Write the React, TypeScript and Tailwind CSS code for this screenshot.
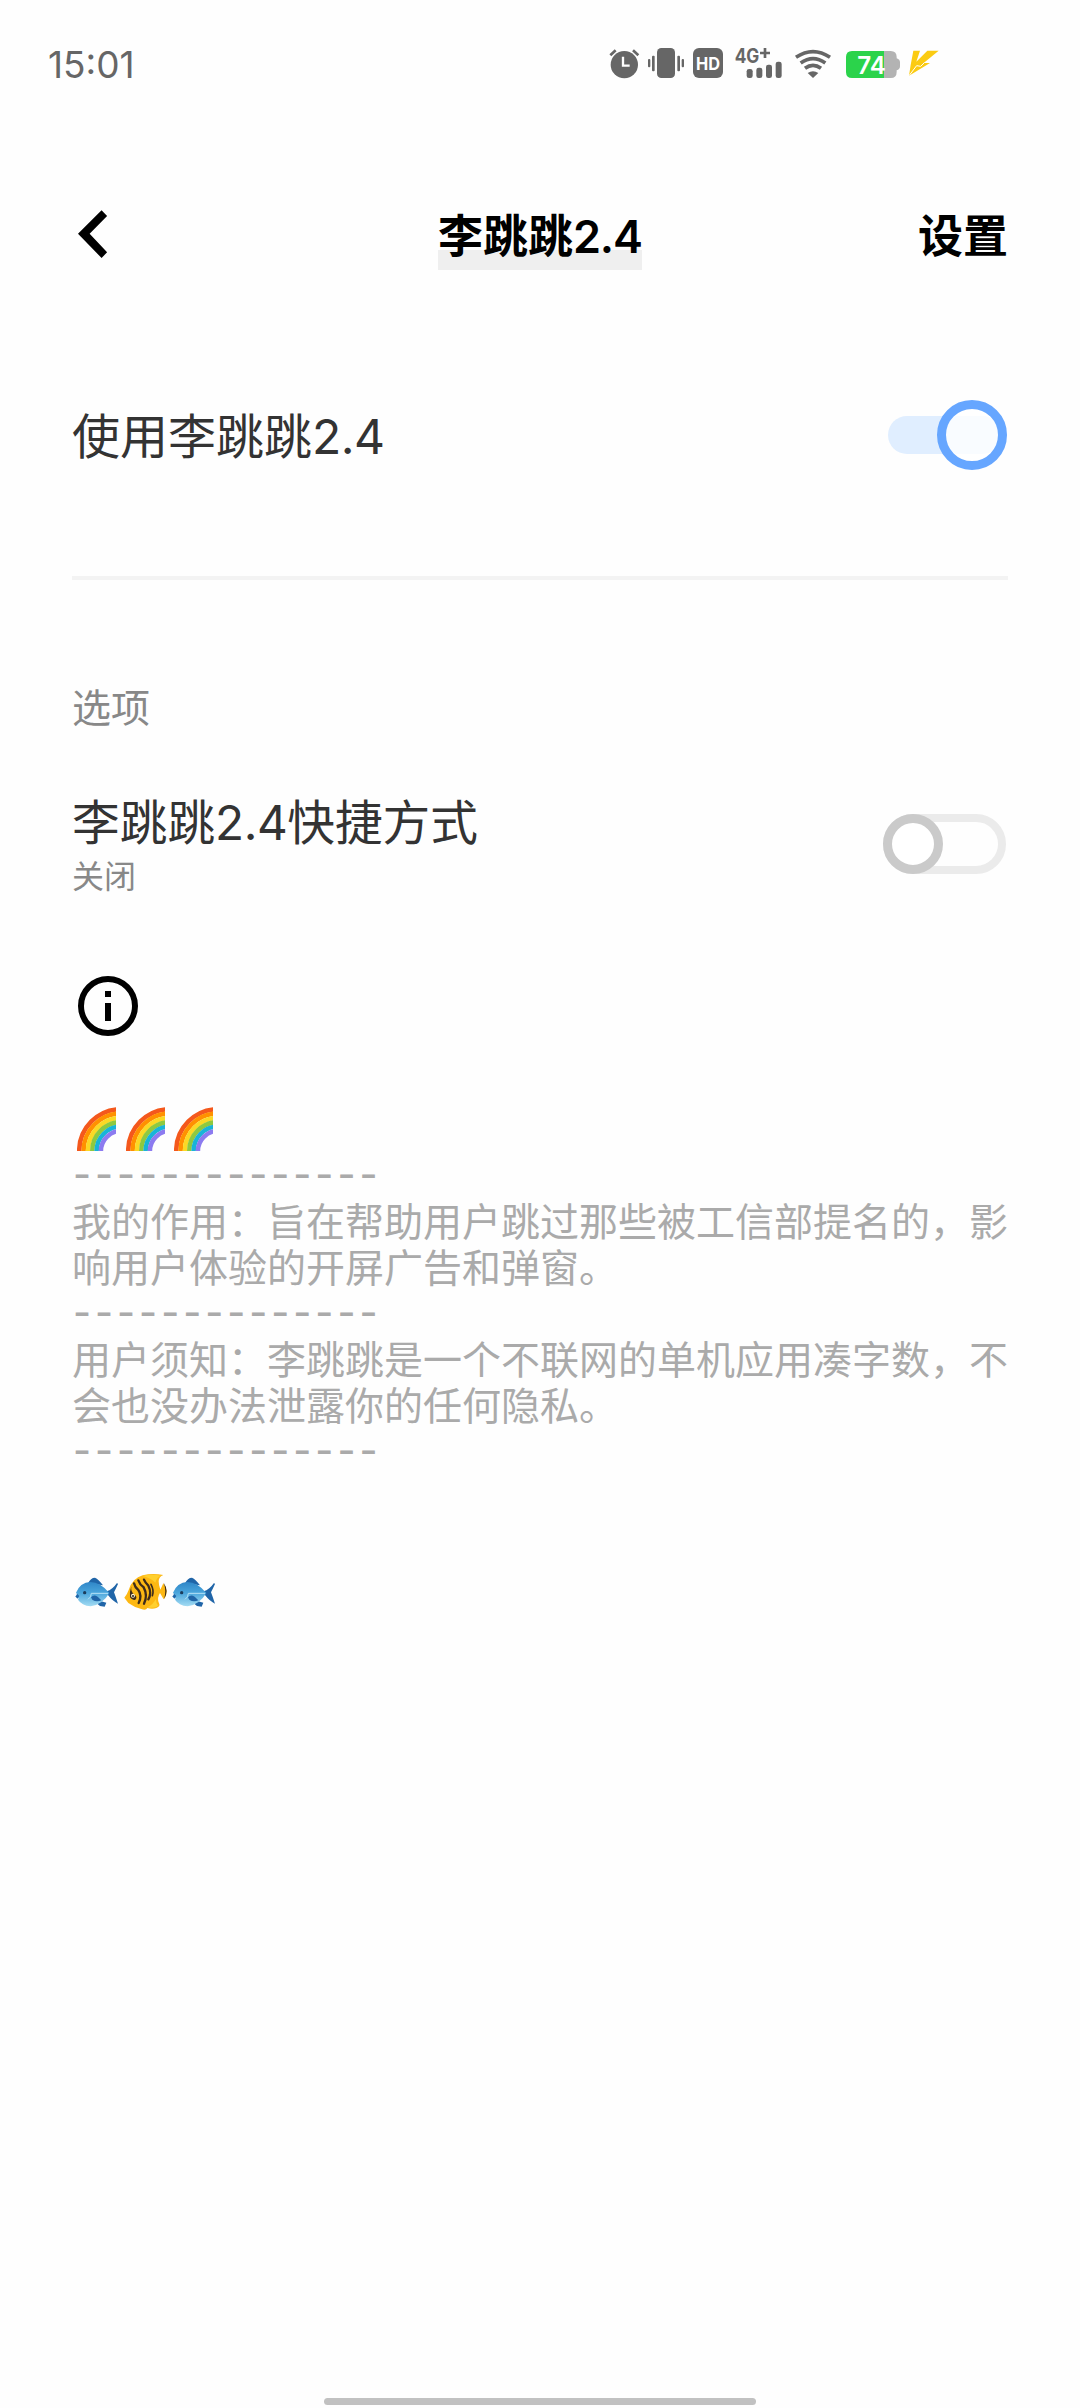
import { useState } from 'react'

function StatusBar() {
  return (
    <div className="flex h-[132px] items-start pl-[48px] text-[#666666]">
      <div className="mt-[41px] w-[561px] font-['Inter'] text-[37px] leading-[48px]">15:01</div>
      <div className="mt-[47px] flex">
        <svg className="h-[33px] w-[31px]" viewBox="57 51 93 99" fill="currentColor">
          <circle cx="103" cy="104" r="41" />
          <path d="M61 76 77 61M145 76 129 61" stroke="currentColor" strokeWidth="8" />
          <path d="M99 80V107H119" fill="none" stroke="#fff" strokeWidth="7" />
        </svg>
        <svg className="ml-[7px] h-[33px] w-[38px]" viewBox="171 51 114 99" fill="currentColor">
          <rect x="201" y="54" width="54" height="90" rx="13" />
          <rect x="186" y="77" width="8" height="47" rx="3" />
          <rect x="174" y="87" width="7" height="25" rx="3" />
          <rect x="262" y="77" width="8" height="47" rx="3" />
          <rect x="275" y="87" width="7" height="25" rx="3" />
        </svg>
        <svg className="ml-[8px] h-[33px] w-[30px]" viewBox="309 51 90 99" fill="currentColor">
          <rect x="309" y="54" width="90" height="90" rx="18" />
          <text x="354" y="119" textAnchor="middle" textLength="72" lengthAdjust="spacingAndGlyphs" fill="#fff" className="font-['Inter'] text-[54px] font-bold">HD</text>
        </svg>
        <svg className="ml-[11px] h-[33px] w-[49px] overflow-visible" viewBox="432 51 147 99" fill="currentColor">
          <text x="434" y="98" textLength="74" lengthAdjust="spacingAndGlyphs" className="font-['Inter'] text-[59px] font-bold">4G</text>
          <path d="M510 69H540M525 54V84" stroke="currentColor" strokeWidth="8" />
          <rect x="470" y="117" width="18" height="27" rx="7" />
          <rect x="499" y="113" width="18" height="31" rx="7" />
          <rect x="528" y="104" width="18" height="40" rx="7" />
          <rect x="557" y="95" width="18" height="49" rx="7" />
        </svg>
        <svg className="ml-[11px] h-[33px] w-[38px]" viewBox="612 51 114 99" fill="none" stroke="currentColor" strokeWidth="11">
          <path d="M618 82Q669 48 720 82" />
          <path d="M632 99Q669 73 706 99" />
          <path d="M645 115Q669 97 693 115" />
          <path d="M653 129Q669 118 685 129L669 144Z" fill="currentColor" stroke="none" />
        </svg>
        <svg className="ml-[14px] h-[33px] w-[55px]" viewBox="768 51 165 99">
          <path d="M882 63H902Q920 63 920 81V85Q930 88 930 97V109Q930 118 920 121V126Q920 144 902 144H882Z" fill="#b3b3b3" />
          <path d="M882 63H786Q768 63 768 81V126Q768 144 786 144H882Z" fill="#2bd34b" />
          <text x="802" y="131" textLength="86" lengthAdjust="spacingAndGlyphs" fill="#fff" className="font-['Inter'] text-[72px] font-semibold">74</text>
        </svg>
        <svg className="ml-[7px] h-[33px] w-[31px]" viewBox="954 51 93 99" fill="#fbcb12">
          <path d="M970 62H990L979 95 1012 62H1046L1001 99H1020L957 137 962 105Z" />
          <path d="M957 137 980 107 992 109 1003 98" fill="none" stroke="#fff" strokeWidth="3" />
        </svg>
      </div>
    </div>
  )
}

function Header() {
  return (
    <header className="grid h-[212px] grid-cols-3 items-start px-[72px] text-[45px] font-bold leading-[66px] text-black">
      <svg className="mt-[76px] ml-[6px] h-[52px] w-[30px]" viewBox="0 0 30 52">
        <path d="M24.3 2.3 30 8 12 25.7 30 44.3 24.3 50 0 25.7Z" transform="scale(.97 1)" />
      </svg>
      <div className="mt-[69px] flex justify-center">
        <h1 className="h-[69px] w-[204px] bg-[linear-gradient(transparent_49px,#efefef_49px)] whitespace-nowrap">
          李跳跳<span className="font-['Inter'] font-semibold tracking-[-1.2px]">2.4</span>
        </h1>
      </div>
      <button className="mt-[69px] text-right">设置</button>
    </header>
  )
}

function Digits() {
  return <span className="font-['Inter'] tracking-[-0.5px]">2.4</span>
}

function SwitchOn({ onClick }: { onClick: () => void }) {
  return (
    <button className="relative h-[70px] w-[120px]" onClick={onClick}>
      <span className="absolute top-[16px] left-0 h-[38px] w-[113px] rounded-full bg-[#e0eeff]" />
      <span className="absolute top-0 right-[1px] size-[70px] rounded-full border-[9px] border-[#66a6ff] bg-white/80 bg-clip-padding" />
    </button>
  )
}

function SwitchOff({ onClick }: { onClick: () => void }) {
  return (
    <button className="relative h-[60px] w-[123px] rounded-full border-[8px] border-[#ebebeb]" onClick={onClick}>
      <span className="absolute -top-[8px] -left-[8px] size-[60px] rounded-full border-[9px] border-[#cacaca] bg-white" />
    </button>
  )
}

const bands = ['#f4581c', '#ff9100', '#fbd925', '#8fc93f', '#18b4d8', '#8c7bf0']

function Rainbow() {
  return (
    <svg className="h-[44px] w-[39px]" viewBox="0 0 39 44" fill="none">
      {bands.map((color, i) => (
        <circle key={color} cx="44" cy="44" r={41.8 - i * 4.35} stroke={color} strokeWidth="4.5" />
      ))}
    </svg>
  )
}

function BlueFish() {
  return (
    <svg className="h-[33px] w-[43px]" viewBox="45 75 129 99">
      <defs>
        <linearGradient id="blue-fish" x1="0" y1="0" x2="0" y2="1">
          <stop offset="0" stopColor="#2f86c8" />
          <stop offset=".45" stopColor="#4ba6dc" />
          <stop offset="1" stopColor="#a4dcf3" />
        </linearGradient>
      </defs>
      <path d="M84 97Q92 80 105 80Q116 85 129 103ZM121 150 139 155 134 167 120 165Q112 160 110 154Z" fill="#2065a8" />
      <path d="M140 121Q157 116 171 96L174 99Q167 114 162 124Q167 137 174 158Q160 153 142 130Z" fill="#2065a8" />
      <path d="M48 125Q61 94 91 93Q122 94 148 126Q128 161 92 166Q65 163 54 146Q60 141 46 136Q55 130 48 125Z" fill="url(#blue-fish)" />
      <path d="M46 136Q54 130 48 125L58 135 52 143Z" fill="#2065a8" />
      <path d="M144 127H94Q94 139 84 145" fill="none" stroke="#b7e3f7" strokeWidth="3" />
      <path d="M93 139Q101 129 113 137L124 148Q109 154 97 146Z" fill="#2065a8" />
      <circle cx="74" cy="125" r="5" fill="#1c3d5c" />
    </svg>
  )
}

function YellowFish() {
  return (
    <svg className="h-[38px] w-[43px]" viewBox="192 63 129 114">
      <path d="M193 137Q202 126 206 114Q218 78 248 70Q277 63 310 69Q296 74 296 88Q296 99 301 113L310 94Q319 106 320 117Q320 132 311 142L300 123Q290 137 297 154Q302 163 289 168Q277 173 262 168Q258 176 244 171Q221 165 205 153Z" fill="#fdb813" />
      <path d="M248 72Q276 65 303 71Q290 76 286 92Q273 79 248 72ZM262 166Q280 157 288 140Q288 155 295 160Q287 171 262 166Z" fill="#ffd02e" />
      <path d="M311 92Q328 116 312 142Q320 116 311 92Z" fill="#3e2c1b" />
      <path d="M214 103Q211 121 225 129Q233 136 226 143Q218 147 210 136Q208 120 214 103Z" fill="#3e2c1b" />
      <g fill="none" stroke="#3e2c1b" strokeLinecap="round" strokeWidth="7">
        <path d="M222 94Q225 107 235 114Q247 131 236 153" />
        <path d="M235 85Q240 99 251 106Q264 130 252 155" />
        <path d="M252 83Q256 93 265 101Q276 123 265 142" />
        <path d="M273 97Q283 116 277 131" strokeWidth="5" />
      </g>
      <circle cx="219" cy="131" r="6" fill="#fff3d1" />
      <circle cx="219" cy="132" r="3" fill="#2b2018" />
    </svg>
  )
}

function Dashes() {
  return <p className="h-[46px] pl-[1px] font-['Inter'] font-medium tracking-[4px]">--------------</p>
}

export default function App() {
  const [enabled, setEnabled] = useState(true)
  const [shortcut, setShortcut] = useState(false)

  return (
    <div className="flex h-[2408px] w-[1080px] flex-col bg-[#fefefe] font-['Noto_Sans_CJK_SC',sans-serif]">
      <StatusBar />
      <Header />

      <main className="flex flex-1 flex-col px-[72px] text-[#333333]">
        <section className="flex h-[236px] items-start justify-between border-b-4 border-[#f3f3f3] pt-[56px]">
          <h2 className="-mt-[2px] h-[70px] text-[48px] leading-[70px]">
            使用李跳跳<Digits />
          </h2>
          {enabled ? <SwitchOn onClick={() => setEnabled(false)} /> : <SwitchOff onClick={() => setEnabled(true)} />}
        </section>

        <div className="mt-[96px] text-[39px] leading-[58px] text-[#888888]">选项</div>

        <section className="mt-[51px] flex items-start justify-between">
          <div>
            <h2 className="h-[70px] text-[47.7px] leading-[70px]">
              李跳跳<Digits />快捷方式
            </h2>
            <p className="text-[32px] leading-[38px] text-[#888888]">{shortcut ? '开启' : '关闭'}</p>
          </div>
          <div className="mt-[29px] mr-[2px]">
            {shortcut ? <SwitchOn onClick={() => setShortcut(false)} /> : <SwitchOff onClick={() => setShortcut(true)} />}
          </div>
        </section>

        <svg className="mt-[77px] size-[72px]" viewBox="0 0 24 24" fill="#000">
          <path d="M11 7h2v2h-2zM11 11h2v6h-2z" />
          <circle cx="12" cy="12" r="9" fill="none" stroke="#000" strokeWidth="2" />
        </svg>

        <section className="mt-[65px] text-[39px] leading-[46px] text-[#aaaaaa]">
          <div className="flex h-[44px] gap-[9.5px] pl-[5px]">
            <Rainbow />
            <Rainbow />
            <Rainbow />
          </div>
          <Dashes />
          <p className="-mt-px mb-px whitespace-nowrap">我的作用：旨在帮助用户跳过那些被工信部提名的，影<br />响用户体验的开屏广告和弹窗。</p>
          <Dashes />
          <p className="-mt-px mb-px whitespace-nowrap">用户须知：李跳跳是一个不联网的单机应用凑字数，不<br />会也没办法泄露你的任何隐私。</p>
          <Dashes />
          <div className="mt-[96px] flex h-[46px] items-center gap-[5.5px] pl-[3px]">
            <BlueFish />
            <YellowFish />
            <BlueFish />
          </div>
        </section>
      </main>

      <div className="mx-auto mb-[3px] h-[7px] w-[432px] rounded-full bg-[#c1c1c1]" />
    </div>
  )
}
